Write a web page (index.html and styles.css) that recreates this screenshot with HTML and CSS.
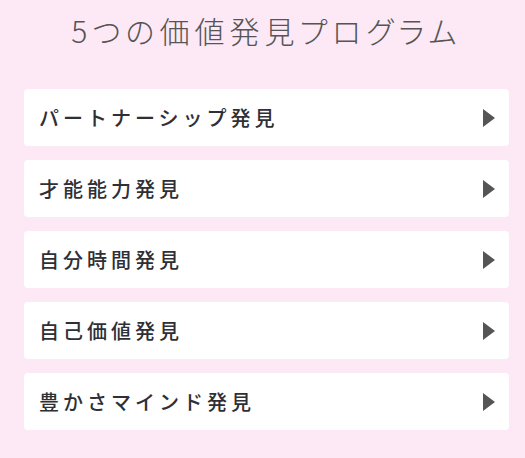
FILE: index.html
```html
<!DOCTYPE html>
<html lang="ja">
<head>
  <meta charset="UTF-8" />
  <meta name="viewport" content="width=device-width, initial-scale=1.0"/>
  <title>5つの価値発見プログラム</title>
  <link rel="stylesheet" href="styles.css">
</head>
<body>
  <div class="container">
    <h1 class="title">5つの価値発見プログラム</h1>

    <ul class="program-list">
      <li class="program-item"><span class="program-name">パートナーシップ発見</span><span class="arrow"></span></li>
      <li class="program-item"><span class="program-name">才能能力発見</span><span class="arrow"></span></li>
      <li class="program-item"><span class="program-name">自分時間発見</span><span class="arrow"></span></li>
      <li class="program-item"><span class="program-name">自己価値発見</span><span class="arrow"></span></li>
      <li class="program-item"><span class="program-name">豊かさマインド発見</span><span class="arrow"></span></li>
    </ul>
  </div>
</body>
</html>
```

FILE: styles.css
```css
* { box-sizing: border-box; }
body {
  margin: 0;
  font-family: "Noto Sans CJK JP", "Noto Sans", sans-serif;
  background: #fce9f5;
  color: #333;
}

.container {
  padding: 0 16px 28px 24px;
}

.title {
  margin: 8px 0 36px;
  text-align: center;
  font-size: 30px;
  line-height: 45px;
  font-weight: 300;
  letter-spacing: 5px;
  color: #555;
  font-feature-settings: "palt";
}

.program-list {
  list-style: none;
  margin: 0;
  padding: 0;
  display: flex;
  flex-direction: column;
  gap: 14px;
}

.program-item {
  display: flex;
  align-items: center;
  justify-content: space-between;
  height: 57px;
  padding: 0 14px 0 15px;
  background: #fff;
  border-radius: 4px;
  cursor: pointer;
}

.program-name {
  font-size: 20px;
  font-weight: 500;
  letter-spacing: 4px;
  color: #2f2f36;
}

.arrow {
  width: 0;
  height: 0;
  border-top: 9px solid transparent;
  border-bottom: 9px solid transparent;
  border-left: 12px solid #555;
}
```
